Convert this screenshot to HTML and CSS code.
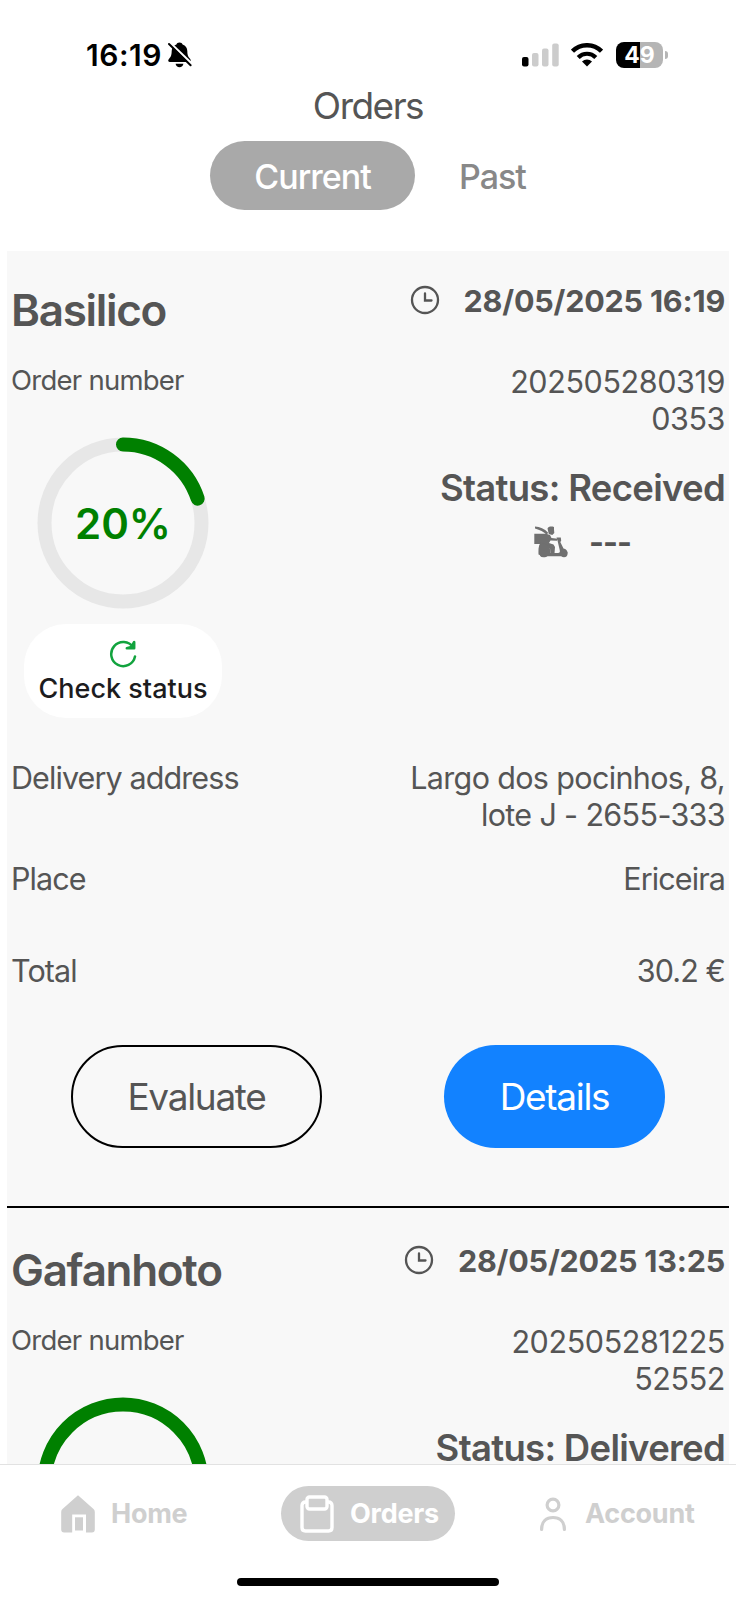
FILE: index.html
```html
<!DOCTYPE html>
<html lang="en">
<head>
    <meta charset="UTF-8">
    <meta name="viewport" content="width=device-width, initial-scale=1.0">
    <title>Orders</title>
    <link rel="stylesheet" href="styles.css">
</head>
<body>
    <!-- Status bar -->
    <div class="status-bar">
        <div class="clock">
            <span class="time">16:19</span>
            <svg class="bell" width="24" height="26" viewBox="0 0 24 26">
                <path d="M11.5 0.5c1.700 0 2.700 0.900 3.100 2.100 3 1 4.600 3.400 4.700 6.400 0.100 4.300 0.900 5.800 2.500 7.500 0.900 1 1.200 1.800 0.800 2.700-0.200 0.500-0.700 0.800-1.400 0.800H1.900c-0.800 0-1.300-0.300-1.500-0.800-0.400-0.900 0-1.700 0.900-2.700 1.600-1.700 2.300-3.200 2.400-7.500 0.100-3 1.700-5.400 4.700-6.400 0.400-1.200 1.400-2.100 3.100-2.100z"/>
                <path d="M7.600 21.800h7.800c-0.300 2-1.800 3.500-3.900 3.500s-3.600-1.500-3.900-3.500z"/>
                <path d="M1.800 0.600L24.400 22.400" stroke="#fff" stroke-width="2.400"/>
                <path d="M1 2L22.600 23.200" stroke="#000" stroke-width="2" stroke-linecap="round"/>
            </svg>
        </div>
        <div class="indicators">
            <svg width="38" height="24" viewBox="0 0 38 24">
                <rect x="0" y="14" width="6.500" height="9.500" rx="2"/>
                <rect x="10" y="10" width="6.500" height="13.500" rx="2" fill="#ccc"/>
                <rect x="20" y="5.500" width="6.500" height="18" rx="2" fill="#ccc"/>
                <rect x="30.200" y="0.500" width="6.500" height="23" rx="2" fill="#ccc"/>
            </svg>
            <svg class="wifi" width="32" height="24" viewBox="0 0 32 24" fill="none" stroke="#000">
                <path d="M1.500 8.200A20.500 20.500 0 0 1 30.500 8.200" stroke-width="4.400"/>
                <path d="M7.200 14.400A12.400 12.400 0 0 1 24.800 14.400" stroke-width="4.200"/>
                <path d="M11 18.600A7.100 7.100 0 0 1 21 18.600L16 23.600z" fill="#000" stroke="none"/>
            </svg>
            <div class="battery">49</div>
        </div>
    </div>

    <h1 class="title">Orders</h1>

    <div class="switch">
        <button class="switch-btn active">Current</button>
        <button class="switch-btn">Past</button>
    </div>

    <!-- Order list -->
    <div class="orders">
        <div class="order">
            <div class="summary">
                <div class="progress">
                    <h2 class="name">Basilico</h2>
                    <p class="label">Order number</p>
                    <div class="ring">
                        <svg width="172" height="172" viewBox="0 0 172 172" fill="none" stroke-width="14">
                            <circle cx="86" cy="86" r="78.500" stroke="#e7e7e7"/>
                            <path d="M86 7.500A78.500 78.500 0 0 1 160.700 61.700" stroke="#008000" stroke-linecap="round"/>
                        </svg>
                        <span class="percent">20%</span>
                    </div>
                    <button class="check">
                        <svg width="28" height="28" viewBox="0 0 28 28" fill="none" stroke="#12a33e" stroke-width="2.500" stroke-linecap="round" stroke-linejoin="round">
                            <path d="M26 16.500A12 12 0 1 1 24.200 7.400"/>
                            <path d="M25.200 2v6.200h-7.400l4.500-1.200z"/>
                        </svg>
                        <span>Check status</span>
                    </button>
                </div>
                <div class="info">
                    <div class="date">
                        <svg width="30" height="30" viewBox="0 0 30 30" fill="none" stroke="#555" stroke-width="2.300">
                            <circle cx="15" cy="15" r="13"/>
                            <path d="M15 8.500v7h6.500" stroke-linecap="round"/>
                        </svg>
                        <span>28/05/2025 16:19</span>
                    </div>
                    <p class="number">202505280319<br>0353</p>
                    <p class="status">Status: Received</p>
                    <div class="courier">
                        <svg width="34" height="32" viewBox="0 0 34 32" fill="#707070">
                            <!-- rider -->
                            <path d="M1 0.600C6 1 10.500 3 14 6.500l-1 2.500C9.500 6 6 4 1 2.600z"/>
                            <path d="M13.500 2.500C14.500 0.500 17 0 20 1v2.500l0.300 3.500-2 2-3.500-1z"/>
                            <path d="M0.300 7.800H12l4 1.200 1.500 3 6 0.800-0.500 2-6.500-0.300L15 17l4.500 1.500 1.500 2.500-0.500 6.500h-4l-0.500-5-6-2-2-2.500H0.300z"/>
                            <!-- scooter -->
                            <path d="M22.500 11.500h4.300l0.400 3.300-0.900 1.200 3.200 6.500c2.500 0.500 4 2.200 4 4.500l-3.500 1.500-2.500 1.700H13.500c-2 1.600-5.500 1.300-7.500-1.200l-1.500-0.500c0-4-0.500-8 2-12l9 3.500 1 7h7.500c2 0 2.200-1.500 1.600-3.500L23.500 14.500z"/>
                            <circle cx="9.200" cy="27.600" r="3.700"/>
                            <circle cx="30" cy="27.600" r="3.600"/>
                        </svg>
                        <span>---</span>
                    </div>
                </div>
            </div>
            <div class="row address">
                <span>Delivery address</span>
                <p class="value">Largo dos pocinhos, 8,<br>lote J - 2655-333</p>
            </div>
            <div class="row place">
                <span>Place</span>
                <span>Ericeira</span>
            </div>
            <div class="row total">
                <span>Total</span>
                <span>30.2 €</span>
            </div>
            <div class="actions">
                <button class="btn evaluate">Evaluate</button>
                <button class="btn details">Details</button>
            </div>
        </div>

        <div class="order">
            <div class="summary">
                <div class="progress">
                    <h2 class="name">Gafanhoto</h2>
                    <p class="label">Order number</p>
                    <div class="ring">
                        <svg width="172" height="172" viewBox="0 0 172 172" fill="none" stroke-width="14">
                            <circle cx="86" cy="86" r="78.500" stroke="#008000"/>
                        </svg>
                    </div>
                </div>
                <div class="info">
                    <div class="date">
                        <svg width="30" height="30" viewBox="0 0 30 30" fill="none" stroke="#555" stroke-width="2.300">
                            <circle cx="15" cy="15" r="13"/>
                            <path d="M15 8.500v7h6.500" stroke-linecap="round"/>
                        </svg>
                        <span>28/05/2025 13:25</span>
                    </div>
                    <p class="number">202505281225<br>52552</p>
                    <p class="status">Status: Delivered</p>
                </div>
            </div>
        </div>
    </div>

    <!-- Bottom navigation -->
    <nav class="tabs">
        <a class="tab">
            <svg width="34" height="38" viewBox="0 0 34 38" fill="#cfcfcf">
                <path d="M17 0.300L32.500 14q1.300 1.200 1.300 3V34.500q0 3-3 3H25V19.500H11.200V37.500H3.200q-3 0-3-3V17q0-1.800 1.300-3z"/>
                <rect x="14" y="22.300" width="8" height="13.200"/>
            </svg>
            <span>Home</span>
        </a>
        <a class="tab active">
            <svg width="34" height="38" viewBox="0 0 34 38" fill="none" stroke="#fff" stroke-width="3.400">
                <path d="M7 7H5.500Q2 7 2 10.500V32.500Q2 36 5.500 36H28.500Q32 36 32 32.500V10.500Q32 7 28.500 7H27"/>
                <rect x="7" y="2" width="20" height="12" rx="2.500"/>
            </svg>
            <span>Orders</span>
        </a>
        <a class="tab account">
            <svg width="28" height="38" viewBox="0 0 28 38" fill="none" stroke="#cfcfcf" stroke-width="3.200" stroke-linecap="round">
                <circle cx="14" cy="10" r="5.900"/>
                <path d="M2.600 34.500C2.600 26 7.500 22.500 14 22.500S25.400 26 25.400 34.500"/>
            </svg>
            <span>Account</span>
        </a>
    </nav>
    <div class="home-indicator"></div>
</body>
</html>
```
FILE: styles.css
```css
* {
    box-sizing: border-box;
    margin: 0;
    padding: 0;
}

body {
    display: flex;
    flex-direction: column;
    height: 1600px;
    overflow: hidden;
    background: #fff;
    color: #555;
    font-family: Inter, "Liberation Sans", sans-serif;
}

button {
    border: none;
    background: none;
    color: inherit;
    font-family: inherit;
}

svg {
    display: block;
    flex-shrink: 0;
}

.status-bar {
    display: flex;
    justify-content: space-between;
    height: 88px;
    padding: 21px 68px 0 86px;
    color: #000;
}

.clock,
.indicators {
    display: flex;
    align-items: center;
}

.time {
    font-size: 30px;
    font-weight: 600;
    letter-spacing: 0.5px;
}

.bell {
    margin-left: 6px;
}

.wifi {
    margin: 0 13px 0 11px;
}

.battery {
    position: relative;
    width: 47px;
    height: 26px;
    margin-right: 5px;
    border-radius: 8px;
    background: linear-gradient(90deg, #000 50%, #b5b5b5 50%);
    color: #fff;
    font-size: 23px;
    font-weight: 700;
    line-height: 26px;
    text-align: center;
}

.battery::after {
    content: "";
    position: absolute;
    top: 9px;
    right: -5px;
    width: 3px;
    height: 8px;
    border-radius: 0 4px 4px 0;
    background: #b5b5b5;
}

.title {
    font-size: 37px;
    font-weight: 400;
    letter-spacing: -1.5px;
    line-height: 36px;
    text-align: center;
}

.switch {
    display: flex;
    justify-content: center;
    gap: 44px;
    margin: 17px 0 41px;
}

.switch-btn {
    height: 69px;
    padding-top: 1px;
    color: #888;
    font-size: 34px;
    font-weight: 500;
    letter-spacing: -1px;
}

.switch-btn.active {
    width: 205px;
    border-radius: 35px;
    background: #a9a9a9;
    color: #fff;
}

.orders {
    flex: 1;
    min-height: 0;
    margin: 0 7px;
    overflow: hidden;
    background: #f8f8f8;
}

.order {
    height: 957px;
    margin-bottom: 3px;
    padding: 0 4px;
    border-bottom: 2px solid #000;
}

.summary {
    display: flex;
    justify-content: space-between;
    height: 467px;
}

.progress {
    padding-top: 35px;
}

.name {
    font-size: 44px;
    font-weight: 600;
    letter-spacing: -1.3px;
    line-height: 48px;
}

.label {
    margin-top: 29px;
    font-size: 27.5px;
    letter-spacing: -0.75px;
    line-height: 34px;
}

.ring {
    display: grid;
    place-items: center;
    width: 172px;
    margin: 40px 0 15px 26px;
}

.ring > * {
    grid-area: 1 / 1;
}

.percent {
    color: #008000;
    font-size: 42px;
    font-weight: 600;
}

.check {
    display: flex;
    flex-direction: column;
    align-items: center;
    width: 198px;
    height: 94px;
    margin-left: 13px;
    padding-top: 16px;
    border-radius: 42px;
    background: #fff;
    color: #1c1c1e;
    font-size: 27px;
    font-weight: 500;
    line-height: 41px;
    white-space: nowrap;
}

.info {
    padding-top: 31px;
    text-align: right;
}

.date {
    display: flex;
    align-items: center;
    justify-content: flex-end;
    gap: 24px;
    height: 36px;
    font-size: 30.5px;
    font-weight: 700;
    letter-spacing: -0.2px;
}

.date svg {
    margin-bottom: 1px;
}

.number {
    margin-top: 46px;
    font-size: 30.5px;
    letter-spacing: -0.4px;
    line-height: 36.5px;
}

.status {
    margin-top: 31px;
    font-size: 36.5px;
    font-weight: 600;
    letter-spacing: -0.7px;
    line-height: 40px;
}

.courier {
    display: flex;
    align-items: center;
    justify-content: flex-end;
    gap: 21px;
    height: 36px;
    margin: 16px 94px 0 0;
    font-size: 32px;
    font-weight: 700;
    letter-spacing: -1px;
}

.row {
    display: flex;
    justify-content: space-between;
    font-size: 30.5px;
    letter-spacing: -0.9px;
    line-height: 36.5px;
}

.address {
    margin-top: 42px;
}

.value {
    letter-spacing: -0.65px;
    text-align: right;
}

.place {
    margin-top: 28px;
}

.total {
    margin-top: 55px;
}

.actions {
    display: flex;
    justify-content: center;
    gap: 122px;
    margin-top: 56px;
}

.btn {
    height: 103px;
    border-radius: 52px;
    font-size: 37px;
    letter-spacing: -1.3px;
}

.evaluate {
    width: 251px;
    border: 2px solid #000;
}

.details {
    width: 221px;
    background: #1282ff;
    color: #fff;
}

.tabs {
    display: grid;
    grid-template-columns: 220px 258px 1fr;
    align-items: center;
    height: 98px;
    padding-left: 61px;
    border-top: 1px solid #e2e2e2;
}

.tab {
    display: flex;
    align-items: center;
    gap: 16px;
    height: 55px;
    color: #cfcfcf;
    font-size: 27px;
    font-weight: 700;
    letter-spacing: -0.25px;
}

.tab.active {
    width: 174px;
    padding-left: 19px;
    border-radius: 28px;
    background: #cfcfcf;
    color: #fff;
}

.tab.account {
    gap: 18px;
}

.home-indicator {
    width: 262px;
    height: 8px;
    margin: 16px auto 14px;
    border-radius: 4px;
    background: #000;
}
```
